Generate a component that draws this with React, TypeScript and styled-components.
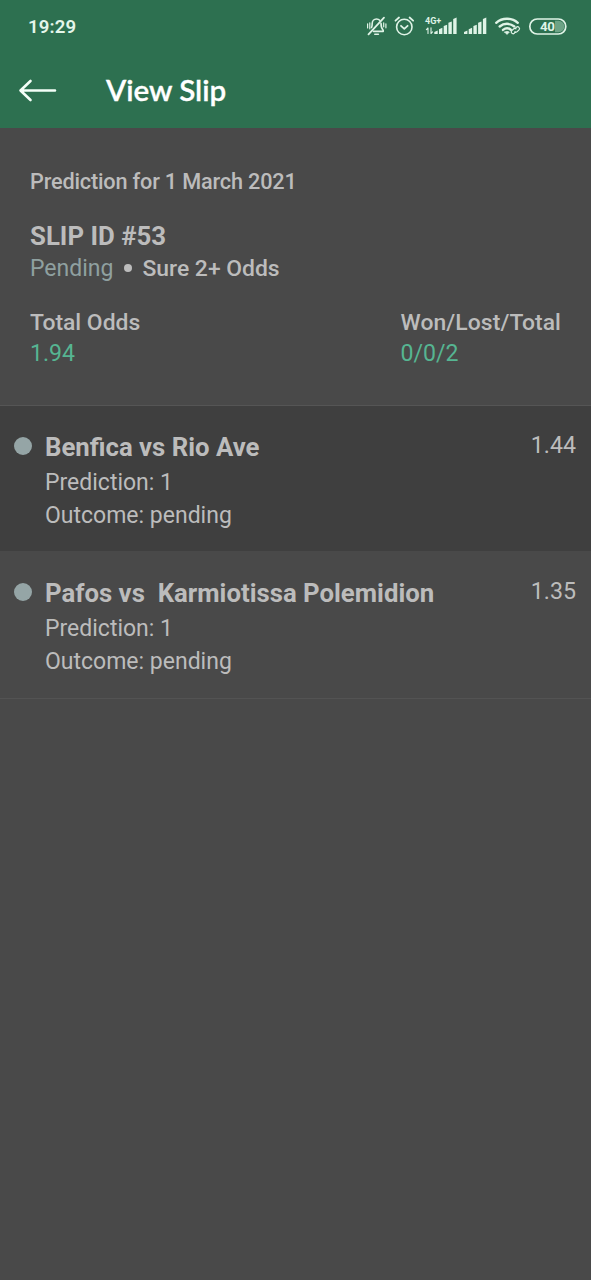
import React from "react";
import styled, { createGlobalStyle } from "styled-components";

const GlobalStyle = createGlobalStyle`
  * { box-sizing: border-box; }
  body { margin: 0; background: #494949; font-family: Roboto, sans-serif; }
`;

const Screen = styled.main`
  min-height: 1280px;
  background: #494949;
  color: #bcbcbc;
`;

const Header = styled.header`
  height: 128px;
  background: #2d7050;
`;

const StatusBar = styled.div`
  height: 54px;
  padding: 0 24px 0 28px;
  display: flex;
  align-items: center;
  justify-content: space-between;
`;

const Clock = styled.span`
  font-size: 18.6px;
  font-weight: 600;
  letter-spacing: 0.15px;
  line-height: 22px;
  color: #e4f6ea;
`;

const StatusIcons = styled.svg`
  display: block;
  width: 202px;
  height: 24px;
`;

const TitleBar = styled.div`
  height: 73px;
  padding-left: 18px;
  display: flex;
  align-items: center;
  gap: 49px;
`;

const BackButton = styled.button`
  width: 39px;
  height: 26px;
  padding: 0;
  border: 0;
  background: none;
`;

const Title = styled.h1`
  margin: 0 0 1px;
  font-family: "Google Sans", Lato, Roboto, sans-serif;
  font-size: 29.6px;
  font-weight: 600;
  line-height: 36px;
  letter-spacing: -0.05px;
  -webkit-text-stroke: 0.3px #fff;
  color: #fff;
`;

const Text = styled.div<{
  $size: number;
  $line: number;
  $weight?: number;
  $color?: string;
  $spacing?: number;
}>`
  font-size: ${(p) => p.$size}px;
  line-height: ${(p) => p.$line}px;
  font-weight: ${(p) => p.$weight ?? 400};
  color: ${(p) => p.$color ?? "inherit"};
  letter-spacing: ${(p) => p.$spacing ?? 0}px;
  white-space: pre;
`;

const Summary = styled.section`
  height: 278px;
  padding: 39px 30px 0;
  border-bottom: 1px solid #555;
`;

const SlipHeading = styled.div`
  margin-top: 22px;
`;

const StatusLine = styled.div`
  height: 32px;
  display: flex;
  align-items: flex-start;
`;

const Bullet = styled.span`
  width: 8px;
  height: 8px;
  margin: 11px 10px 0 11px;
  border-radius: 50%;
  background: #bcbcbc;
`;

const Totals = styled.div`
  margin-top: 22px;
  display: flex;
  justify-content: space-between;
`;

const MatchRow = styled.article<{ $dark?: boolean }>`
  height: ${(p) => (p.$dark ? 145 : 148)}px;
  padding: ${(p) => (p.$dark ? 24 : 25)}px 15px 0 14px;
  display: flex;
  background: ${(p) => (p.$dark ? "#3f3f3f" : "#494949")};
  border-bottom: ${(p) => (p.$dark ? "0" : "1px solid #535353")};
`;

const Dot = styled.span`
  flex: none;
  width: 18px;
  height: 18px;
  margin: 7px 13px 0 0;
  border-radius: 50%;
  background: #95a5a6;
`;

const MatchInfo = styled.div`
  flex: 1;
`;

const MatchDetails = styled.div`
  margin-top: 2px;
`;

const matches = [
  { teams: "Benfica vs Rio Ave", tip: "1", outcome: "pending", odds: "1.44" },
  { teams: "Pafos vs  Karmiotissa Polemidion", tip: "1", outcome: "pending", odds: "1.35" },
];

function StatusGlyphs() {
  const ink = "#dff3e6";
  return (
    <StatusIcons viewBox="365 15 202 24" fill="none" stroke={ink} strokeWidth="1.6" strokeLinecap="round" strokeLinejoin="round">
      {/* muted bell */}
      <path d="M371.500 27.500c.7-1.200.7-2.600.7-4 0-2.600 1.800-4.500 4.300-4.500 1.400 0 2.400.4 3.200 1.300M381 23.300c0 2.800.2 4.900 2.200 6.900v1.200H373.500M374.800 34.200h3.600" />
      <path d="M384 17.700 368.500 34.300" strokeWidth="1.800" />
      <path d="M367.600 23.800v4.200M369.800 22.800v6M383.700 22.800v4M385.900 23.800v4" strokeWidth="1.200" />
      {/* alarm clock */}
      <circle cx="404.300" cy="27" r="7.700" />
      <path d="m401 25.800 3.300 3 3.300-3M395.500 20.700l3.500-3.200M413.100 20.700l-3.500-3.200" strokeWidth="1.800" />
      {/* network label and data arrows */}
      <text x="425" y="24" fill={ink} stroke="none" fontFamily="Roboto, sans-serif" fontSize="9" fontWeight="700">4G+</text>
      <path d="M428 33.500V28l-1.600 1.600M431 27.800v5.700l1.500-1.600" strokeWidth="1.100" />
      {/* signal bars */}
      <g fill={ink} stroke="none">
        <path d="M434.300 34v-2l3.400-1.500V34zM439 34v-4.700l3.400-1.500V34zM443.700 34v-8l3.400-1.200V34zM448.400 34V22.700l3.400-1.200V34zM453.200 34V19l3.400-1.500V34z" />
        <path d="M464 34v-2l3.400-1.500V34zM468.700 34v-4.700l3.400-1.500V34zM473.400 34v-8l3.400-1.200V34zM478.100 34V22.700l3.400-1.200V34zM482.900 34V19l3.400-1.500V34z" />
      </g>
      {/* wifi with link */}
      <path d="M496.200 22.800c6-5.400 15.600-5.400 21.600 0M499.700 26.500c4.200-3.600 10.400-3.600 14.600 0" strokeWidth="2.400" />
      <path d="M503 29.900c2.400-1.900 5.600-1.900 7.800-.2" strokeWidth="2.400" />
      <path d="m504.700 32.100 2.300 2.300 2.300-2.300c-1.400-.9-3.200-.9-4.600 0z" fill={ink} strokeWidth="0.800" />
      <path d="m515.200 28.400 1.200-1.100c1.700-1.500 4.200.8 2.600 2.600l-1.800 1.800c-.8.800-1.800.7-2.500.2M515.500 31.800l-1.200 1.400c-1.700 1.600-4.200-.8-2.500-2.500l1.700-1.700c.8-.7 1.700-.7 2.400-.2" strokeWidth="1.200" />
      {/* battery */}
      <path d="M555 20.800h3.600a5.700 5.700 0 0 1 0 11.400H555z" fill="#6da386" stroke="none" />
      <rect x="529.800" y="19" width="36" height="15" rx="7.500" strokeWidth="1.700" />
      <text x="547.200" y="31.300" textAnchor="middle" fill={ink} stroke="none" fontFamily="Roboto, sans-serif" fontSize="13.300" fontWeight="700" letterSpacing="-0.500">40</text>
    </StatusIcons>
  );
}

export default function App() {
  return (
    <Screen>
      <GlobalStyle />
      <Header>
        <StatusBar>
          <Clock>19:29</Clock>
          <StatusGlyphs />
        </StatusBar>
        <TitleBar>
          <BackButton aria-label="Back">
            <svg width="39" height="26" viewBox="0 0 39 26" fill="none" stroke="#f4fff8" strokeWidth="2.600" strokeLinecap="round" strokeLinejoin="round">
              <path d="M12.500 3 2.500 12.500l10 9.500M2.500 12.500H37" />
            </svg>
          </BackButton>
          <Title>View Slip</Title>
        </TitleBar>
      </Header>
      <Summary>
        <Text $size={21.7} $line={30} $weight={500} $spacing={-0.18}>Prediction for 1 March 2021</Text>
        <SlipHeading>
          <Text $size={25.8} $line={34} $weight={700}>SLIP ID #53</Text>
        </SlipHeading>
        <StatusLine>
          <Text $size={23} $line={32} $color="#8fa0a0">Pending</Text>
          <Bullet />
          <Text $size={22.9} $line={31} $weight={500}>Sure 2+ Odds</Text>
        </StatusLine>
        <Totals>
          <div>
            <Text $size={22.9} $line={31} $weight={500}>Total Odds</Text>
            <Text $size={23.1} $line={31} $color="#56b592">1.94</Text>
          </div>
          <div>
            <Text $size={22.9} $line={31} $weight={500} $spacing={0.08}>Won/Lost/Total</Text>
            <Text $size={23.1} $line={31} $color="#56b592">0/0/2</Text>
          </div>
        </Totals>
      </Summary>
      {matches.map((m, i) => (
        <MatchRow key={m.teams} $dark={i % 2 === 0}>
          <Dot />
          <MatchInfo>
            <Text $size={25.75} $line={34} $weight={700}>{m.teams}</Text>
            <MatchDetails>
              <Text $size={23} $line={33}>{`Prediction: ${m.tip}`}</Text>
              <Text $size={23} $line={33}>{`Outcome: ${m.outcome}`}</Text>
            </MatchDetails>
          </MatchInfo>
          <Text $size={23.2} $line={30}>{m.odds}</Text>
        </MatchRow>
      ))}
    </Screen>
  );
}
